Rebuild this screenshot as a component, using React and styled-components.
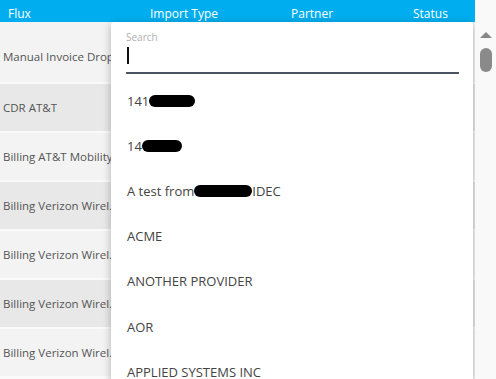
import React from "react";
import styled, { createGlobalStyle } from "styled-components";

const GlobalStyle = createGlobalStyle`
  html, body {
    margin: 0;
    padding: 0;
    height: 379px;
    overflow: hidden;
    background: #fafafa;
    font-family: "Open Sans", "Liberation Sans", sans-serif;
  }
`;

const columns = ["Flux", "Import Type", "Partner", "Status"];

const rows = [
  "Manual Invoice Drop",
  "CDR AT&T",
  "Billing AT&T Mobility",
  "Billing Verizon Wireless",
  "Billing Verizon Wireless",
  "Billing Verizon Wireless",
  "Billing Verizon Wireless",
];

// each option may hold a hidden (blacked out) part
const options = [
  { before: "141", mask: 46 },
  { before: "14", mask: 40 },
  { before: "A test from", mask: 58, after: "IDEC" },
  { before: "ACME" },
  { before: "ANOTHER PROVIDER" },
  { before: "AOR" },
  { before: "APPLIED SYSTEMS INC" },
];

const App = () => {
  return (
    <>
      <GlobalStyle />
      <Page>
        <Table>
          <HeaderRow>
            {columns.map((c) => (
              <HeaderCell key={c}>{c}</HeaderCell>
            ))}
          </HeaderRow>

          {rows.map((r, i) => (
            <Row key={i} $odd={i % 2 === 1} $first={i === 0}>
              <Cell>{r}</Cell>
            </Row>
          ))}

          {/* the partner picker laid over the table */}
          <Dropdown>
            <SearchBox>
              <SearchLabel>Search</SearchLabel>
              <SearchInput>
                <Caret />
              </SearchInput>
            </SearchBox>
            <OptionList>
              {options.map((o, i) => (
                <Option key={i}>
                  {o.before}
                  {o.mask && <Mask style={{ width: o.mask }} />}
                  {o.after}
                </Option>
              ))}
            </OptionList>
          </Dropdown>
        </Table>

        <Scrollbar>
          <ArrowUp />
          <Thumb />
        </Scrollbar>
      </Page>
    </>
  );
};

export default App;

const Page = styled.div`
  display: flex;
  height: 379px;
  overflow: hidden;
`;

const Table = styled.div`
  position: relative;
  flex: 1;
  display: flex;
  flex-direction: column;
  overflow: hidden;
`;

const HeaderRow = styled.div`
  display: grid;
  grid-template-columns: 142px 141px 122px 1fr;
  height: 22px;
  padding-left: 8px;
  background: #00aeef;
  flex-shrink: 0;
`;

const HeaderCell = styled.div`
  color: #fff;
  font-size: 12px;
  line-height: 16px;
  padding-top: 6px;
  white-space: nowrap;
`;

const Row = styled.div`
  display: flex;
  align-items: center;
  flex-shrink: 0;
  height: ${(p) => (p.$first ? "52px" : "47px")};
  padding-top: ${(p) => (p.$first ? "8px" : "0")};
  margin-bottom: 2px;
  background: ${(p) => (p.$odd ? "#e8e8e8" : "#f3f3f3")};
`;

const Cell = styled.div`
  padding-left: 3px;
  max-width: 116px;
  font-size: 11.5px;
  color: #555;
  white-space: nowrap;
  overflow: hidden;
  text-overflow: ellipsis;
`;

const Dropdown = styled.div`
  position: absolute;
  top: 22px;
  left: 111px;
  right: 2px;
  bottom: -20px;
  background: #fff;
  border-radius: 3px 3px 0 0;
  box-shadow: 0 2px 8px rgba(0, 0, 0, 0.28);
`;

const SearchBox = styled.div`
  padding: 8px 14px 0 15px;
  margin-bottom: 4px;
`;

const SearchLabel = styled.div`
  font-size: 10px;
  line-height: 14px;
  color: #b0b0b0;
`;

const SearchInput = styled.div`
  height: 25px;
  border-bottom: 2px solid #4b5461;
`;

const Caret = styled.div`
  margin-top: 3px;
  margin-left: 1px;
  width: 2px;
  height: 17px;
  background: #111;
`;

const OptionList = styled.div`
  display: flex;
  flex-direction: column;
`;

const Option = styled.div`
  display: flex;
  align-items: center;
  height: 45.2px;
  padding-left: 16px;
  font-size: 13px;
  color: #444;
  white-space: nowrap;
`;

const Mask = styled.span`
  display: inline-block;
  height: 12px;
  margin-top: 1px;
  border-radius: 6px;
  background: #000;
`;

const Scrollbar = styled.div`
  width: 21px;
  flex-shrink: 0;
  display: flex;
  flex-direction: column;
  align-items: center;
  padding-top: 32px;
  background: #f9f9f9;
`;

const ArrowUp = styled.div`
  width: 0;
  height: 0;
  border-left: 6px solid transparent;
  border-right: 6px solid transparent;
  border-bottom: 6px solid #888;
`;

const Thumb = styled.div`
  margin-top: 10px;
  width: 12px;
  height: 24px;
  border-radius: 6px;
  background: #8a8a8a;
`;
